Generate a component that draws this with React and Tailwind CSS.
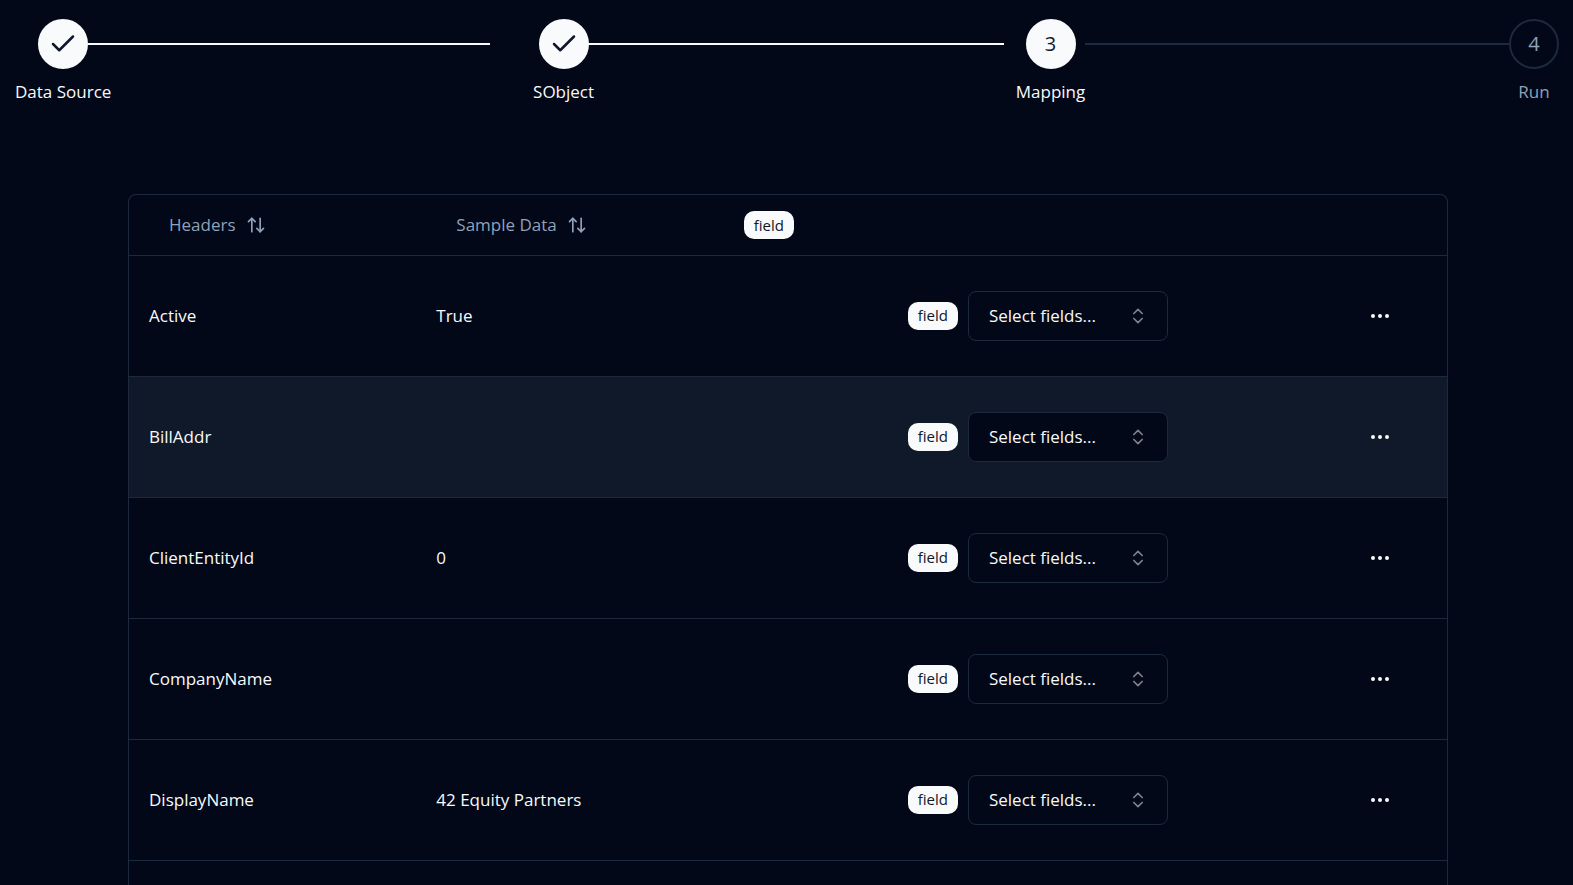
import React, { useState } from 'react'
import { Check, ArrowUpDown, ChevronsUpDown, MoreHorizontal } from 'lucide-react'

const rows = [
	{ header: 'Active', sample: 'True' },
	{ header: 'BillAddr', sample: '' },
	{ header: 'ClientEntityId', sample: '0' },
	{ header: 'CompanyName', sample: '' },
	{ header: 'DisplayName', sample: '42 Equity Partners' },
]

const Step = ({ number, label, status }) => {
	const active = status !== 'pending'
	return (
		<div className={`flex shrink-0 flex-col items-center gap-2 ${active ? 'text-slate-50' : 'text-slate-400'}`}>
			<div className={`flex size-[50px] items-center justify-center rounded-full border-2 text-xl ${active ? 'border-slate-50 bg-slate-50 text-slate-900' : 'border-slate-800'}`}>
				{status === 'done' ? <Check size={30} strokeWidth={2} /> : number}
			</div>
			<span className='whitespace-nowrap leading-[30px]'>{label}</span>
		</div>
	)
}

const Badge = () => (
	<span className='inline-flex h-7 items-center rounded-[10px] bg-slate-50 px-[10px] text-[15px] text-slate-900'>field</span>
)

const SortButton = ({ children }) => (
	<button type='button' className='flex h-[50px] items-center gap-[10px] rounded-lg px-5 hover:bg-slate-800'>
		{children}
		<ArrowUpDown size={20} />
	</button>
)

const FieldSelect = ({ name }) => {
	const [value, setValue] = useState('')
	return (
		<div className='relative w-[200px]'>
			<select
				aria-label={`Field for ${name}`}
				value={value}
				onChange={(e) => setValue(e.target.value)}
				className='h-[50px] w-full appearance-none rounded-lg border border-slate-800 bg-[#020817] px-5 text-slate-50'
			>
				<option value=''>Select fields...</option>
			</select>
			<ChevronsUpDown size={20} className='pointer-events-none absolute top-[15px] right-5 text-slate-50 opacity-50' />
		</div>
	)
}

const App = () => {
	return (
		<div className="flex min-h-screen flex-col bg-[#020817] font-['Open_Sans',sans-serif] text-[17px] text-slate-50">
			<div className='flex items-start pt-[19px] pr-[14px] pl-[15px]'>
				<Step number={1} label='Data Source' status='done' />
				<div className='mt-6 mr-[43px] -ml-[23px] h-[2px] flex-[402] bg-slate-50'></div>
				<Step number={2} label='SObject' status='done' />
				<div className='mt-6 mr-3 -ml-[6px] h-[2px] flex-[416] bg-slate-50'></div>
				<Step number={3} label='Mapping' status='current' />
				<div className='mt-6 h-[2px] flex-[424] bg-slate-800'></div>
				<Step number={4} label='Run' status='pending' />
			</div>
			<div className='mt-[87px] mr-[125px] ml-32 grow rounded-t-lg border border-b-0 border-slate-800'>
				<table className='w-full table-fixed text-left'>
					<colgroup>
						<col className='w-[21.8%]' />
						<col className='w-[21.8%]' />
						<col />
						<col className='w-[107px]' />
					</colgroup>
					<thead>
						<tr className='h-[60px] border-b border-slate-800 text-slate-400'>
							<th className='px-5 font-normal'><SortButton>Headers</SortButton></th>
							<th className='px-5 font-normal'><SortButton>Sample Data</SortButton></th>
							<th className='px-10 font-normal'><Badge /></th>
							<th></th>
						</tr>
					</thead>
					<tbody>
						{rows.map((row, index) => (
							<tr key={row.header} className={`h-[121px] border-b border-slate-800 ${index === 1 ? 'bg-[#101929]' : ''}`}>
								<td className='px-5'>{row.header}</td>
								<td className='px-5'>{row.sample}</td>
								<td className='pr-5 pl-[52px]'>
									<div className='flex items-center justify-center gap-[10px]'>
										<Badge />
										<FieldSelect name={row.header} />
									</div>
								</td>
								<td className='px-5'>
									<button type='button' aria-label='Open menu' className='flex size-10 items-center justify-center rounded-lg hover:bg-slate-800'>
										<MoreHorizontal size={24} />
									</button>
								</td>
							</tr>
						))}
					</tbody>
				</table>
			</div>
		</div>
	)
}

export default App
